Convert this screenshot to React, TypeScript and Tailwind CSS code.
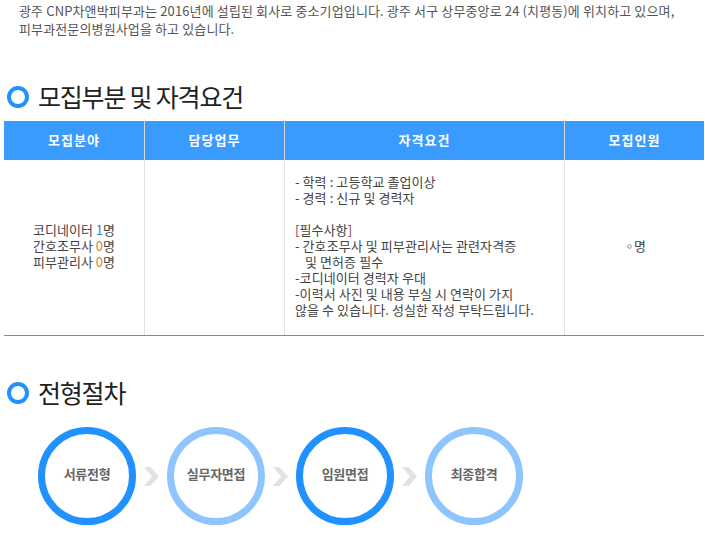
const font = { fontFamily: '"Noto Sans CJK KR", "Noto Sans", sans-serif' };

function Heading({ children }: { children: string }) {
  return (
    <div className="flex h-[40px] items-center">
      <div className="ml-[7px] h-[22px] w-[22px] rounded-full border-[4px] border-[#2191ff]" />
      <h2 className="ml-[9px] pb-[2px] text-[25px] font-normal leading-[38px] tracking-[-1.2px] text-[#222222]">{children}</h2>
    </div>
  );
}

function Step({ label, light }: { label: string; light?: boolean }) {
  return (
    <div
      className={`flex h-[98px] w-[98px] items-center justify-center rounded-full border-[7px] pb-[5px] text-[13px] font-bold tracking-[-0.3px] text-[#666666] ${
        light ? "border-[#8ec5ff]" : "border-[#2191ff]"
      }`}
    >
      {label}
    </div>
  );
}

function Arrow() {
  return (
    <svg width="15" height="19" viewBox="0 0 15 19" className="mx-[8px] shrink-0">
      <path d="M0 0H6.5L15 9.5L6.5 19H0L8 9.5Z" fill="#e2e2e2" />
    </svg>
  );
}

const headers = ["모집분야", "담당업무", "자격요건", "모집인원"];
const cols = "grid grid-cols-[141px_140px_280px_139px]";

export default function App() {
  return (
    <div style={font} className="h-[560px] w-[705px] overflow-hidden bg-white text-[13px] text-[#444444]">
      <p className="pl-[19px] pt-[2px] text-[13px] leading-[18px] tracking-[0.13px] text-[#555555]">
        광주 CNP차앤박피부과는 2016년에 설립된 회사로 중소기업입니다. 광주 서구 상무중앙로 24 (치평동)에 위치하고 있으며,
        <br />
        피부과전문의병원사업을 하고 있습니다.
      </p>
      <div className="mt-[39px]">
        <Heading>모집부분 및 자격요건</Heading>
      </div>
      <div className="ml-[4px] mt-[4px] w-[700px]">
        <div className={`${cols} h-[39px] bg-[#3a9bff] text-[13px] font-bold tracking-[1px] text-white`}>
          {headers.map((h, i) => (
            <div key={h} className={`flex items-center justify-center pb-[1px] ${i < 3 ? "border-r border-[#d5d5d5]" : ""}`}>
              {h}
            </div>
          ))}
        </div>
        <div className={`${cols} h-[176px] border-b border-[#888888] leading-[16px] text-[#444444]`}>
          <div className="flex items-center justify-center border-r border-[#e2e2e2] pb-[3px] text-center">
            <div>
              코디네이터 <span className="inline-block text-[#2f80d0]">1</span>명
              <br />
              간호조무사 <span className="inline-block text-[#c98a3a]">0</span>명
              <br />
              피부관리사 <span className="inline-block text-[#c98a3a]">0</span>명
            </div>
          </div>
          <div className="border-r border-[#e2e2e2]" />
          <div className="flex items-center border-r border-[#e2e2e2] pb-[3px] pl-[10px]">
            <div className="tracking-[0.08px]">
              - 학력 : 고등학교 졸업이상
              <br />
              - 경력 : 신규 및 경력자
              <br />
              <br />
              <span className="inline-block text-[#8a3a3a]">[</span>필수사항<span className="inline-block text-[#8a3a3a]">]</span>
              <br />
              - 간호조무사 및 피부관리사는 관련자격증
              <br />
              <span className="inline-block pl-[10px]">및 면허증 필수</span>
              <br />
              -코디네이터 경력자 우대
              <br />
              -이력서 사진 및 내용 부실 시 연락이 가지
              <br />
              않을 수 있습니다. 성실한 작성 부탁드립니다.
            </div>
          </div>
          <div className="flex items-center justify-center pb-[3px]">
            <span className="inline-block tracking-[-2px]">◦</span>명
          </div>
        </div>
      </div>
      <div className="mt-[37px]">
        <Heading>전형절차</Heading>
      </div>
      <div className="ml-[38px] mt-[14px] flex items-center">
        <Step label="서류전형" />
        <Arrow />
        <Step label="실무자면접" light />
        <Arrow />
        <Step label="임원면접" />
        <Arrow />
        <Step label="최종합격" light />
      </div>
    </div>
  );
}
